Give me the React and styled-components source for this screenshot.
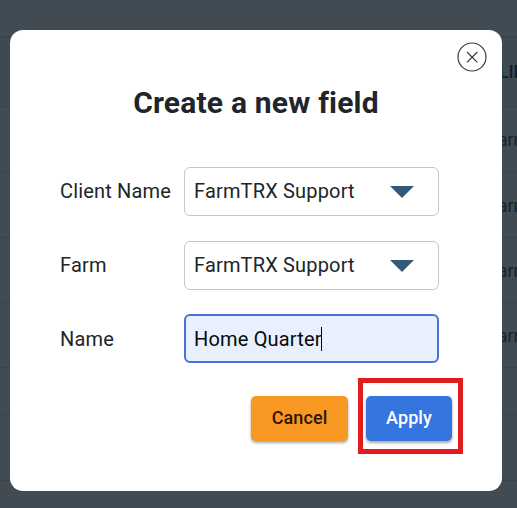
import React from "react";
import styled, { createGlobalStyle } from "styled-components";

const GlobalStyle = createGlobalStyle`
  * { box-sizing: border-box; }
  body { margin: 0; font-family: Roboto, sans-serif; overflow: hidden; }
`;
const Page = styled.main`
  position: relative;
  width: 517px;
  height: 508px;
  overflow: hidden;
  background: #414b53;
`;
const TableRow = styled.div`
  display: flex;
  align-items: center;
  justify-content: flex-end;
  height: ${(p) => p.$height}px;
  border-bottom: 1px solid #39434b;
  background: ${(p) => (p.$header ? "#3f4951" : "#414b53")};
`;
const Cell = styled.span`
  width: ${(p) => (p.$header ? 30 : 29)}px;
  white-space: nowrap;
  font-size: 18px;
  font-weight: ${(p) => (p.$header ? 500 : 400)};
  color: ${(p) => (p.$header ? "#101e35" : "#1a2229")};
`;
const Overlay = styled.div`
  position: absolute;
  inset: 0;
  padding: 30px 15px 17px 10px;
`;
const Dialog = styled.section`
  position: relative;
  height: 461px;
  padding: 53px 63px 0 50px;
  border-radius: 13px;
  background: #fff;
  color: #212529;
`;
const Close = styled.button`
  position: absolute;
  top: 12px;
  right: 15px;
  width: 30px;
  height: 30px;
  padding: 0;
  border: 0;
  background: none;
  svg { display: block; }
`;
const Title = styled.h1`
  margin: 0 -13px 0 0;
  height: 84px;
  line-height: 40px;
  text-align: center;
  font-size: 30px;
  font-weight: 700;
  letter-spacing: 0.2px;
`;
const Form = styled.form`
  display: grid;
  gap: 25px;
`;
const Row = styled.label`
  display: grid;
  grid-template-columns: 124px 255px;
  align-items: center;
  height: 49px;
  font-size: 20px;
  letter-spacing: 0.17px;
  &:last-child { margin-top: -1px; }
`;
const Label = styled.span`
  padding-bottom: ${(p) => (p.$centered ? 0 : 2)}px;
`;
const Field = styled.div`
  display: flex;
  align-items: center;
  justify-content: space-between;
  height: 49px;
  padding: 0 24px 0 9px;
  border: 1px solid #c5c6c8;
  border-radius: 6px;
  white-space: nowrap;
`;
const TextField = styled(Field)`
  justify-content: flex-start;
  padding-left: 8px;
  border: 2px solid #4374cf;
  background: #e8f0fe;
  color: #07090c;
`;
const Caret = styled.span`
  width: 1px;
  height: 24px;
  margin-left: -1px;
  background: #000;
`;
const Actions = styled.footer`
  display: flex;
  justify-content: flex-end;
  align-items: baseline;
  gap: 10px;
  margin: 15px -24px 0 0;
`;
const Button = styled.button`
  width: ${(p) => p.$width}px;
  height: 45px;
  padding: 0 0 3px;
  border: 0;
  border-radius: 5px;
  background: ${(p) => (p.$primary ? "#3475df" : "#f89823")};
  color: ${(p) => (p.$primary ? "#fff" : "#321500")};
  font: 500 18px Roboto, sans-serif;
  letter-spacing: 0.1px;
  box-shadow: 0 2px 3px rgba(0, 0, 0, 0.35);
`;
const Highlight = styled.div`
  width: 105px;
  height: 76px;
  padding: 13px 0 0 3px;
  border: 5px solid #e21d20;
`;

const rows = [66, 65, 65, 65, 47, 66, 28];

const Arrow = () => (
  <svg width="24" height="12" viewBox="0 0 24 12">
    <path d="M0 0H24L12 12Z" fill="#31597a" />
  </svg>
);

const SelectRow = ({ label, value }) => (
  <Row>
    <Label>{label}</Label>
    <Field><Label>{value}</Label><Arrow /></Field>
  </Row>
);

export default function App() {
  return (
    <Page>
      <GlobalStyle />
      <TableRow $height={37} />
      <TableRow $height={70} $header><Cell $header>CLIENT</Cell></TableRow>
      {rows.map((height, i) => (
        <TableRow key={i} $height={height}>{i < 4 && <Cell>Farm</Cell>}</TableRow>
      ))}
      <Overlay>
        <Dialog role="dialog" aria-label="Create a new field">
          <Close aria-label="Close">
            <svg width="30" height="30" viewBox="0 0 30 30" fill="none" stroke="#36383a" strokeWidth="1.2">
              <circle cx="15" cy="15" r="14" />
              <path d="M10 10L20.3 20.3M20.3 10L10 20.3" />
            </svg>
          </Close>
          <Title>Create a new field</Title>
          <Form onSubmit={(e) => e.preventDefault()}>
            <SelectRow label="Client Name" value="FarmTRX Support" />
            <SelectRow label="Farm" value="FarmTRX Support" />
            <Row>
              <Label $centered>Name</Label>
              <TextField><span>Home Quarter</span><Caret /></TextField>
            </Row>
          </Form>
          <Actions>
            <Button $width={97}>Cancel</Button>
            <Highlight><Button $primary $width={86}>Apply</Button></Highlight>
          </Actions>
        </Dialog>
      </Overlay>
    </Page>
  );
}
